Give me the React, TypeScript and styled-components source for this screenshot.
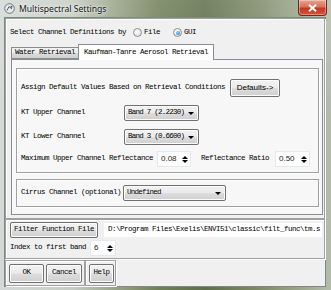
import React from "react";
import styled, { createGlobalStyle } from "styled-components";

const Global = createGlobalStyle`
  html, body { margin: 0; padding: 0; background: #8a9878; }
  * { box-sizing: border-box; }
`;

const MONO = `"Liberation Mono", "DejaVu Sans Mono", monospace`;
const SANS = `"Liberation Sans", Arial, sans-serif`;

const Window = styled.div`
  width: 331px;
  height: 290px;
  display: flex;
  flex-direction: column;
  background:
    linear-gradient(180deg, rgba(255,255,255,0.15) 0%, rgba(0,0,0,0) 40%),
    linear-gradient(90deg, #d4d9d8 0%, #c7ccc4 22%, #9aa68a 34%, #6f7f58 48%, #5f6f4c 62%, #7c8a66 78%, #9eaa90 92%, #b4bcac 100%);
  overflow: hidden;
`;

const TitleBar = styled.div`
  height: 17px;
  display: flex;
  align-items: center;
  padding-left: 4px;
  gap: 4px;
  flex-shrink: 0;
`;

const Title = styled.span`
  font-family: "Noto Sans", ${SANS};
  font-size: 8.6px;
  color: #111;
  text-shadow: 0 0 4px rgba(255,255,255,0.9), 0 0 2px rgba(255,255,255,0.9);
  flex: 1;
  line-height: 1;
  margin-top: 1px;
`;

const CloseBtn = styled.div`
  width: 29px;
  height: 16px;
  align-self: flex-start;
  margin-right: 4px;
  border: 1px solid #6b2a20;
  border-top: none;
  border-radius: 0 0 4px 4px;
  background: linear-gradient(180deg, #e9a28e 0%, #d9735a 45%, #c23a22 55%, #d2553a 100%);
  display: flex;
  align-items: center;
  justify-content: center;
  box-shadow: inset 0 0 0 1px rgba(255,255,255,0.35);
`;

const Client = styled.div`
  flex: 1;
  margin: 0 5px 3px 4px;
  background: #f0f0f0;
  border: 1px solid #7e8a7c;
  display: flex;
  flex-direction: column;
  padding: 0;
`;

const Etched = styled.div<{ $h: number }>`
  height: ${(p) => p.$h}px;
  border: 1px solid #a0a0a0;
  box-shadow: inset 1px 1px 0 #fff, 1px 1px 0 #fff;
  flex-shrink: 0;
`;

const GroupA = styled(Etched)`
  display: flex;
  flex-direction: column;
  padding: 5px 2px 0 4px;
`;

const Row = styled.div<{ $h: number; $gap?: number; $mt?: number }>`
  height: ${(p) => p.$h}px;
  display: flex;
  align-items: center;
  gap: ${(p) => p.$gap ?? 0}px;
  margin-top: ${(p) => p.$mt ?? 0}px;
  flex-shrink: 0;
`;

const Text = styled.span<{ $w?: number; $pl?: number }>`
  font-family: ${MONO};
  font-size: 7.5px;
  letter-spacing: -0.5px;
  color: #000;
  white-space: nowrap;
  line-height: 1;
  ${(p) => (p.$w ? `width: ${p.$w}px; flex-shrink: 0;` : "")}
  ${(p) => (p.$pl ? `padding-left: ${p.$pl}px;` : "")}
`;

const RadioWrap = styled.label`
  display: flex;
  align-items: center;
  gap: 2px;
`;

const RadioDot = styled.span<{ $on?: boolean }>`
  width: 9px;
  height: 9px;
  border-radius: 50%;
  border: 1px solid #8e8f8f;
  background: radial-gradient(circle at 40% 35%, #ffffff 0%, #e2e2e2 70%, #cfcfcf 100%);
  display: flex;
  align-items: center;
  justify-content: center;
  &::after {
    content: "";
    width: 4px;
    height: 4px;
    border-radius: 50%;
    background: ${(p) => (p.$on ? "radial-gradient(circle at 40% 35%, #8fd3ff, #1b6fb8)" : "transparent")};
  }
`;

const TabWidget = styled.div`
  margin-top: 3px;
  margin-left: 1px;
  width: 312px;
  display: flex;
  flex-direction: column;
`;

const TabBar = styled.div`
  height: 15px;
  display: flex;
  align-items: flex-end;
`;

const Tab = styled.div<{ $active?: boolean }>`
  height: ${(p) => (p.$active ? 16 : 12)}px;
  padding: 0 ${(p) => (p.$active ? 5 : 3)}px;
  border: 1px solid #898c95;
  border-bottom: ${(p) => (p.$active ? "none" : "1px solid #898c95")};
  margin-left: ${(p) => (p.$active ? -1 : 0)}px;
  margin-bottom: ${(p) => (p.$active ? -1 : 0)}px;
  background: ${(p) => (p.$active ? "#ffffff" : "linear-gradient(180deg, #f2f2f2 0%, #ebebeb 50%, #dddddd 51%, #cfcfcf 100%)")};
  display: flex;
  align-items: center;
  position: relative;
  z-index: ${(p) => (p.$active ? 1 : 0)};
`;

const Pane = styled.div`
  height: 156px;
  border: 1px solid #898c95;
  background: #f7f7f7;
  padding: 8px 3px 0 4px;
  display: flex;
  flex-direction: column;
  gap: 6px;
`;

const Group1 = styled(Etched)`
  width: 303px;
  display: flex;
  flex-direction: column;
  padding: 10px 0 0 4px;
`;

const Group2 = styled(Etched)`
  width: 303px;
  display: flex;
  align-items: center;
  padding: 0 0 0 4px;
`;

const Win7Button = styled.div<{ $w: number; $h: number; $sans?: boolean }>`
  width: ${(p) => p.$w}px;
  height: ${(p) => p.$h}px;
  border: 1px solid #707070;
  border-radius: 2px;
  background: linear-gradient(180deg, #f2f2f2 0%, #ebebeb 48%, #dddddd 52%, #cfcfcf 100%);
  box-shadow: inset 0 0 0 1px #fcfcfc;
  display: flex;
  align-items: center;
  justify-content: center;
  flex-shrink: 0;
  font-family: ${(p) => (p.$sans ? SANS : MONO)};
  font-size: ${(p) => (p.$sans ? "8px" : "7.5px")};
  letter-spacing: ${(p) => (p.$sans ? "0" : "-0.5px")};
  color: #000;
  white-space: nowrap;
  line-height: 1;
`;

const Combo = styled.div<{ $w: number }>`
  width: ${(p) => p.$w}px;
  height: 16px;
  border: 1px solid #707070;
  border-radius: 2px;
  background: linear-gradient(180deg, #f2f2f2 0%, #ebebeb 48%, #dddddd 52%, #cfcfcf 100%);
  box-shadow: inset 0 0 0 1px #fcfcfc;
  display: flex;
  align-items: center;
  padding: 0 4px 0 3px;
  flex-shrink: 0;
`;

const ComboText = styled(Text)`
  flex: 1;
  overflow: hidden;
  letter-spacing: -0.75px;
`;

const Arrow = styled.span<{ $up?: boolean }>`
  width: 0;
  height: 0;
  border-left: 3px solid transparent;
  border-right: 3px solid transparent;
  ${(p) => (p.$up ? "border-bottom: 3px solid #000;" : "border-top: 3px solid #000;")}
`;

const Spin = styled.div<{ $w: number }>`
  width: ${(p) => p.$w}px;
  height: 16px;
  background: #fff;
  border: 1px solid #e3e9ef;
  display: flex;
  align-items: center;
  padding: 0 2px 0 3px;
  flex-shrink: 0;
`;

const SpinText = styled.span`
  flex: 1;
  font-family: ${SANS};
  font-size: 8px;
  color: #222;
  line-height: 1;
`;

const SpinArrows = styled.span`
  display: flex;
  flex-direction: column;
  gap: 1px;
`;

const GroupB = styled(Etched)`
  display: flex;
  flex-direction: column;
  padding: 2px 0 0 4px;
  gap: 2px;
`;

const PathBox = styled.div`
  width: 218px;
  height: 14px;
  margin-left: 6px;
  background: #fff;
  display: flex;
  align-items: center;
  padding-left: 4px;
  overflow: hidden;
`;

const ButtonRow = styled.div`
  display: flex;
  height: 26px;
  margin-top: 1px;
`;

const BtnGroup = styled(Etched)<{ $w: number }>`
  width: ${(p) => p.$w}px;
  display: flex;
  align-items: center;
  padding: 0 0 0 3px;
  gap: 2px;
`;

const Spinner = ({ w, value }: { w: number; value: string }) => (
  <Spin $w={w}>
    <SpinText>{value}</SpinText>
    <SpinArrows>
      <Arrow $up />
      <Arrow />
    </SpinArrows>
  </Spin>
);

const Dropdown = ({ w, value }: { w: number; value: string }) => (
  <Combo $w={w}>
    <ComboText>{value}</ComboText>
    <Arrow />
  </Combo>
);

export default function App() {
  return (
    <>
      <Global />
      <Window>
        <TitleBar>
          <svg width="11" height="11" viewBox="0 0 11 11">
            <circle cx="5.5" cy="5.5" r="4.8" fill="#e8ecee" stroke="#6d7479" strokeWidth="1" />
            <path d="M3 7.5 L5 3.5 L8 6" fill="none" stroke="#4f5a63" strokeWidth="1" />
            <circle cx="7.5" cy="3.8" r="1" fill="#4f5a63" />
          </svg>
          <Title>Multispectral Settings</Title>
          <CloseBtn>
            <svg width="9" height="8" viewBox="0 0 9 8">
              <path d="M1 0.8 L8 7.2 M8 0.8 L1 7.2" stroke="#fff" strokeWidth="1.9" />
            </svg>
          </CloseBtn>
        </TitleBar>
        <Client>
          <GroupA $h={201}>
            <Row $h={17}>
              <Text $w={123}>Select Channel Definitions by</Text>
              <RadioWrap>
                <RadioDot />
                <Text $w={29}>File</Text>
              </RadioWrap>
              <RadioWrap>
                <RadioDot $on />
                <Text>GUI</Text>
              </RadioWrap>
            </Row>
            <TabWidget>
              <TabBar>
                <Tab>
                  <Text>Water Retrieval</Text>
                </Tab>
                <Tab $active>
                  <Text>Kaufman-Tanre Aerosol Retrieval</Text>
                </Tab>
              </TabBar>
              <Pane>
                <Group1 $h={105}>
                  <Row $h={18}>
                    <Text $w={209}>Assign Default Values Based on Retrieval Conditions</Text>
                    <Win7Button $w={50} $h={18} $sans>
                      Defaults-&gt;
                    </Win7Button>
                  </Row>
                  <Row $h={16} $mt={8}>
                    <Text $w={103}>KT Upper Channel</Text>
                    <Dropdown w={75} value="Band 7 (2.2230)" />
                  </Row>
                  <Row $h={16} $mt={8}>
                    <Text $w={103}>KT Lower Channel</Text>
                    <Dropdown w={75} value="Band 3 (0.6600)" />
                  </Row>
                  <Row $h={16} $mt={6}>
                    <Text $w={136}>Maximum Upper Channel Reflectance</Text>
                    <Spinner w={34} value="0.08" />
                    <Text $w={84} $pl={10}>
                      Reflectance Ratio
                    </Text>
                    <Spinner w={35} value="0.50" />
                  </Row>
                </Group1>
                <Group2 $h={28}>
                  <Text $w={102}>Cirrus Channel (optional)</Text>
                  <Dropdown w={103} value="Undefined" />
                </Group2>
              </Pane>
            </TabWidget>
          </GroupA>
          <GroupB $h={40}>
            <Row $h={16}>
              <Win7Button $w={88} $h={16}>
                Filter Function File
              </Win7Button>
              <PathBox>
                <Text>D:\Program Files\Exelis\ENVI51\classic\filt_func\tm.s</Text>
              </PathBox>
            </Row>
            <Row $h={16}>
              <Text $w={80}>Index to first band</Text>
              <Spinner w={26} value="6" />
            </Row>
          </GroupB>
          <ButtonRow>
            <BtnGroup $w={80} $h={26}>
              <Win7Button $w={35} $h={19}>
                OK
              </Win7Button>
              <Win7Button $w={36} $h={19}>
                Cancel
              </Win7Button>
            </BtnGroup>
            <BtnGroup $w={31} $h={26}>
              <Win7Button $w={25} $h={19}>
                Help
              </Win7Button>
            </BtnGroup>
          </ButtonRow>
        </Client>
      </Window>
    </>
  );
}
